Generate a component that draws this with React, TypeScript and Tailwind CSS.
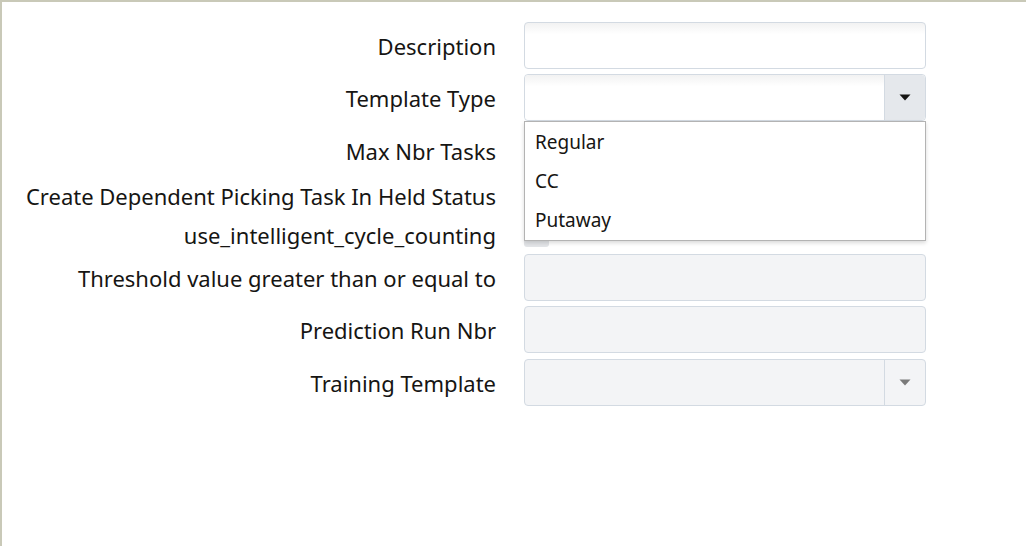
import React from "react";

const Caret = ({ color }: { color: string }) => (
  <svg width="12" height="7" viewBox="0 0 12 7">
    <path d="M0.5 0.5 L11.5 0.5 L6 6.5 Z" fill={color} />
  </svg>
);

const Label = ({ children }: { children: React.ReactNode }) => (
  <div className="w-[494px] shrink-0 text-right text-[22px] leading-none text-[#161513] whitespace-nowrap">{children}</div>
);

export default function App() {
  return (
    <div
      className="w-[1026px] h-[546px] border-t-2 border-l-2 border-[#c9c9b8] bg-white"
      style={{ fontFamily: '"Noto Sans", "Open Sans", sans-serif' }}
    >
      <div className="flex flex-col pt-[20px]">
        {/* Description */}
        <div className="flex items-center h-[47px]">
          <Label>Description</Label>
          <div className="ml-[28px] w-[402px] h-[47px] rounded-[4px] border border-[#d3dae2] bg-gradient-to-b from-[#f2f2f2] to-white to-[25%]" />
        </div>
        {/* Template Type */}
        <div className="relative flex items-center h-[47px] mt-[5px]">
          <Label>Template Type</Label>
          <div className="relative ml-[28px] w-[402px] h-[47px] rounded-[4px] border border-[#d3dae2] flex bg-white">
            <div className="flex-1 bg-gradient-to-b from-[#f2f2f2] to-white to-[25%] rounded-l-[4px]" />
            <div className="w-[41px] border-l border-[#d3dae2] bg-[#e5e8ec] flex items-center justify-center rounded-r-[4px]">
              <Caret color="#161513" />
            </div>
            <div className="absolute z-10 left-[-1px] top-[46px] w-[402px] h-[120px] border border-[#b3b3b3] bg-white shadow-[0_2px_4px_rgba(0,0,0,0.15)] pt-[10px] pl-[10px] text-[19px] leading-none text-[#161513]">
              <div className="h-[39px] pt-[1px]">Regular</div>
              <div className="h-[39px] pt-[1px]">CC</div>
              <div className="h-[39px] pt-[1px]">Putaway</div>
            </div>
          </div>
        </div>
        {/* Max Nbr Tasks */}
        <div className="flex items-center h-[47px] mt-[6px]">
          <Label>Max Nbr Tasks</Label>
          <div className="ml-[28px] w-[402px] h-[47px] rounded-[4px] border border-[#d3dae2] bg-white" />
        </div>
        {/* Create Dependent */}
        <div className="flex items-center h-[39px] mt-[2px]">
          <Label>Create Dependent Picking Task In Held Status</Label>
          <div className="ml-[28px] w-[25px] h-[24px] rounded-[3px] bg-[#e3e5e8]" />
        </div>
        {/* use_intelligent */}
        <div className="flex items-center h-[39px]">
          <Label>use_intelligent_cycle_counting</Label>
          <div className="ml-[28px] w-[25px] h-[24px] rounded-[3px] bg-[#e3e5e8]" />
        </div>
        {/* Threshold */}
        <div className="flex items-center h-[47px] mt-[0px]">
          <Label>Threshold value greater than or equal to</Label>
          <div className="ml-[28px] w-[402px] h-[47px] rounded-[4px] border border-[#d3dae2] bg-[#f3f4f6]" />
        </div>
        {/* Prediction */}
        <div className="flex items-center h-[47px] mt-[5px]">
          <Label>Prediction Run Nbr</Label>
          <div className="ml-[28px] w-[402px] h-[47px] rounded-[4px] border border-[#d3dae2] bg-[#f3f4f6]" />
        </div>
        {/* Training Template */}
        <div className="flex items-center h-[47px] mt-[6px]">
          <Label>Training Template</Label>
          <div className="ml-[28px] w-[402px] h-[47px] rounded-[4px] border border-[#d3dae2] bg-[#f3f4f6] flex">
            <div className="flex-1" />
            <div className="w-[41px] border-l border-[#d3dae2] flex items-center justify-center">
              <Caret color="#7a7a7a" />
            </div>
          </div>
        </div>
      </div>
    </div>
  );
}
